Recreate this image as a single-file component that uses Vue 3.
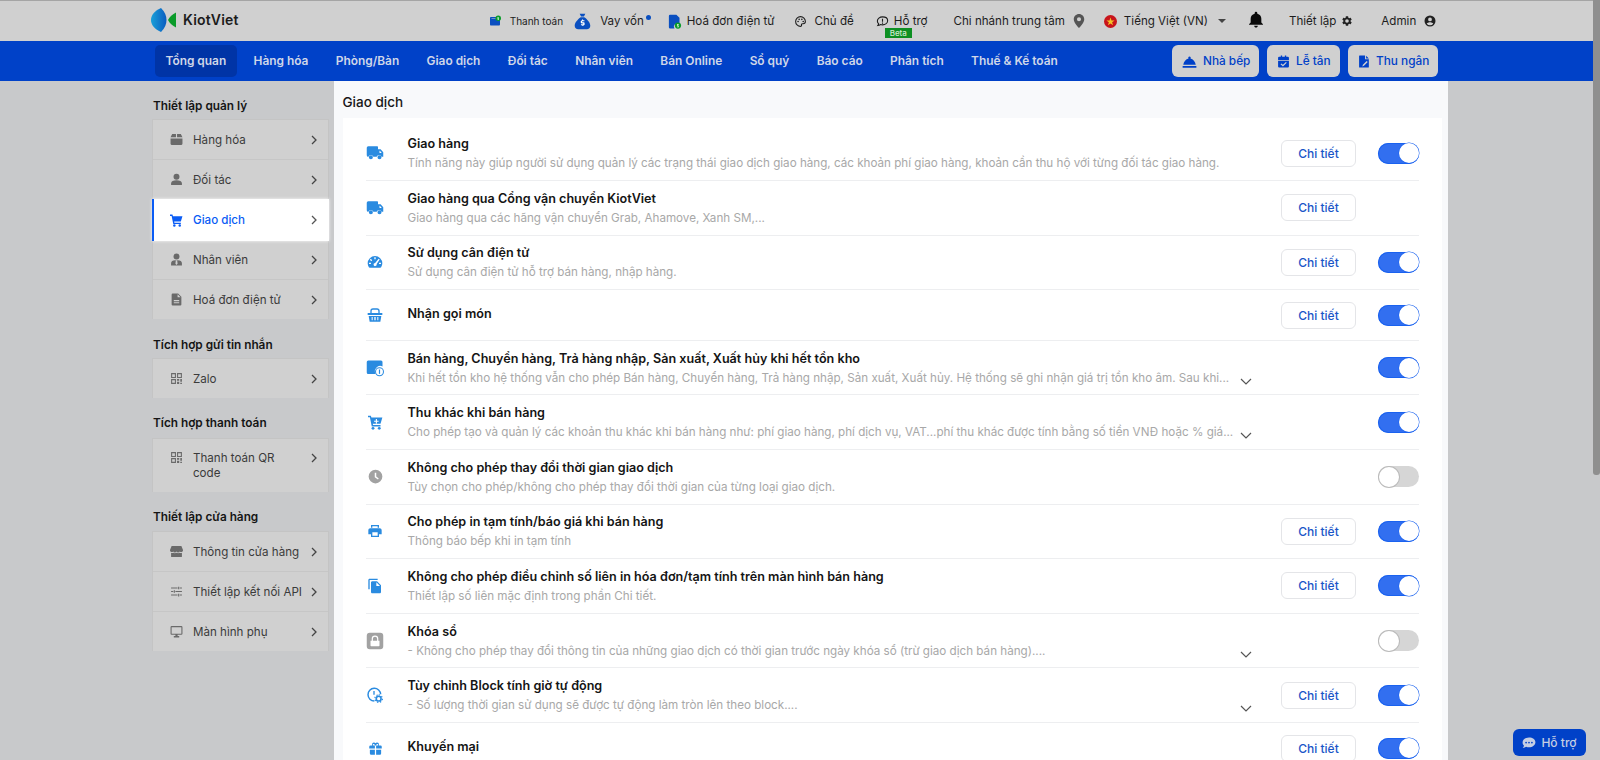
<script setup>
import { h } from 'vue'

const icons = {
  wallet: '<path d="M2 6c0-1 .8-2 2-2h13v3H5v1h15c1 0 2 .8 2 2v9c0 1-1 2-2 2H4c-1.2 0-2-1-2-2z"/><circle cx="18.5" cy="6.5" r="5.5" fill="#0a9b2a"/><path d="M17 4.5h3v1.2h-2v1h2v3h-3V8.5h2v-1h-2z" fill="#fff"/>',
  bag: '<path d="M8 1h8l-2 4h-4zM9.5 6h5C19 9 23 14 23 18c0 3-2 5-5 5H6c-3 0-5-2-5-5 0-4 4-9 8.5-12z"/><path d="M11.3 9h1.4v1.2h2v1.5h-3.2v1.2h2c1 0 1.5.6 1.5 1.5v1.5c0 .9-.5 1.5-1.8 1.5v1.1h-1.4v-1.1h-2v-1.5h3.2v-1.2h-2c-1 0-1.5-.6-1.5-1.5v-1.2c0-.9.5-1.5 1.8-1.5z" fill="#fff"/>',
  invoice: '<path d="M5 1h10l5 5v9h-4a5 5 0 0 0-4 8H5a2 2 0 0 1-2-2V3a2 2 0 0 1 2-2z"/><circle cx="17.5" cy="18.5" r="5" fill="#0a9b2a"/><path d="M16 16h3v1.2h-2v1h2v3h-3V20h2v-1h-2z" fill="#d8f0d8"/>',
  palette: '<path fill="none" stroke="currentColor" stroke-width="2" d="M12 3C7 3 3 7 3 12s4 9 9 9c1.5 0 2.3-1.2 1.9-2.3-.6-1.5.3-2.7 1.8-2.7H17c2.5 0 4-1.8 4-4 0-5-4-9-9-9z"/><circle cx="7.5" cy="12" r="1.5"/><circle cx="9.5" cy="8" r="1.5"/><circle cx="14.5" cy="8" r="1.5"/><circle cx="17" cy="12" r="1.5"/>',
  chat: '<path fill="none" stroke="currentColor" stroke-width="2" d="M12 3.5c-5.2 0-9.5 3.5-9.5 7.8 0 2 .9 3.7 2.4 5-.4 1.5-1.6 3.2-1.6 3.2 2.2-.1 3.8-1 4.8-1.8 1.2.4 2.5.6 3.9.6 5.2 0 9.5-3.5 9.5-8S17.2 3.5 12 3.5z"/><path d="M11 7h2v5.5h-2zM11 14h2v2h-2z"/>',
  pin: '<path fill-rule="evenodd" d="M12 0C7 0 3 4 3 9c0 6.5 9 15 9 15s9-8.5 9-15c0-5-4-9-9-9zm0 12.5a3.5 3.5 0 1 1 0-7 3.5 3.5 0 0 1 0 7z"/>',
  flag: '<circle cx="12" cy="12" r="12" fill="#c8151b"/><path d="M12 4.5l1.9 5.5h5.7l-4.6 3.5 1.7 5.6L12 15.7l-4.7 3.4L9 13.5 4.4 10h5.7z" fill="#f3c326"/>',
  bell: '<path d="M12 24c1.5 0 2.7-1.2 2.7-2.7H9.3C9.3 22.8 10.5 24 12 24zm8-7.5V11c0-3.7-2.2-6.8-6-7.7V2.5a2 2 0 0 0-4 0v.8C6.2 4.2 4 7.3 4 11v5.5L1.5 19v1h21v-1z"/>',
  gear: '<path fill-rule="evenodd" d="M19.14 12.94c.04-.3.06-.61.06-.94 0-.32-.02-.64-.07-.94l2.03-1.58a.49.49 0 0 0 .12-.61l-1.92-3.32a.488.488 0 0 0-.59-.22l-2.39.96c-.5-.38-1.03-.7-1.62-.94l-.36-2.54a.484.484 0 0 0-.48-.41h-3.84c-.24 0-.43.17-.47.41l-.36 2.54c-.59.24-1.13.57-1.62.94l-2.39-.96c-.22-.08-.47 0-.59.22L2.74 8.87c-.12.21-.08.47.12.61l2.03 1.58c-.05.3-.09.63-.09.94s.02.64.07.94l-2.03 1.58a.49.49 0 0 0-.12.61l1.92 3.32c.12.22.37.29.59.22l2.39-.96c.5.38 1.03.7 1.62.94l.36 2.54c.05.24.24.41.48.41h3.84c.24 0 .44-.17.47-.41l.36-2.54c.59-.24 1.13-.56 1.62-.94l2.39.96c.22.08.47 0 .59-.22l1.92-3.32c.12-.22.07-.47-.12-.61l-2.01-1.58zM12 15.6a3.6 3.6 0 1 1 0-7.2 3.6 3.6 0 0 1 0 7.2z"/>',
  user: '<path fill-rule="evenodd" d="M12 1a11 11 0 1 0 0 22 11 11 0 0 0 0-22zm0 4a3.8 3.8 0 1 1 0 7.6A3.8 3.8 0 0 1 12 5zm0 15.5a8.5 8.5 0 0 1-6.5-3c1-2 4-3 6.5-3s5.5 1 6.5 3a8.5 8.5 0 0 1-6.5 3z"/>',
  dome: '<path d="M1 19h22v3H1zM12 4a2 2 0 0 1 1.5 3.3C18 8 21 12.5 22 17H2C3 12.5 6 8 10.5 7.3A2 2 0 0 1 12 4z"/>',
  calcheck: '<path fill-rule="evenodd" d="M7 1h2.5v2h5V1H17v2h3a2 2 0 0 1 2 2v4H2V5a2 2 0 0 1 2-2h3zM2 10.5h20V21a2 2 0 0 1-2 2H4a2 2 0 0 1-2-2zm14.5 2.5L11 18.2l-3-2.7-1.5 1.5 4.5 4.3 7-6.8z"/>',
  filesign: '<path fill-rule="evenodd" d="M3 1h10v7h7v14a1 1 0 0 1-1 1H3a1 1 0 0 1-1-1V2a1 1 0 0 1 1-1zm12 .5L20 6.5h-5zM16 11l-7 7-1 3 3-1 7-7z"/>',
  comment: '<path fill-rule="evenodd" d="M12 2.5C5.9 2.5 1 6.4 1 11.2c0 2.1.9 4 2.5 5.5-.6 2-2.3 3.8-2.3 3.8 2.5 0 4.5-.9 5.8-2 1.5.6 3.2.9 5 .9 6.1 0 11-3.9 11-8.7S18.1 2.5 12 2.5zM7 9.7a1.5 1.5 0 1 1 0 3 1.5 1.5 0 0 1 0-3zm5 0a1.5 1.5 0 1 1 0 3 1.5 1.5 0 0 1 0-3zm5 0a1.5 1.5 0 1 1 0 3 1.5 1.5 0 0 1 0-3z"/>',
  box: '<path d="M4 2h7v6H1zM13 2h7l3 6H13zM1 10h22v10a2 2 0 0 1-2 2H3a2 2 0 0 1-2-2z"/>',
  person: '<circle cx="12" cy="7" r="5.5"/><path d="M2 22v-3c0-3.5 4-5.5 10-5.5s10 2 10 5.5v3z"/>',
  staff: '<circle cx="12" cy="6.5" r="5.5"/><path fill-rule="evenodd" d="M2 23v-4c0-3.5 3-5.5 7.5-5.5h5c4.5 0 7.5 2 7.5 5.5v4zM10.7 14l-.7 6 2 2 2-2-.7-6z"/>',
  doc: '<path fill-rule="evenodd" d="M5 1h10l6 6v14a2 2 0 0 1-2 2H5a2 2 0 0 1-2-2V3a2 2 0 0 1 2-2zm9 1.5V8h5.5zM7 13v2h10v-2zm0 4v2h10v-2z"/>',
  qr: '<path fill-rule="evenodd" d="M2 2h9v9H2zm2 2v5h5V4zM13 2h9v9h-9zm2 2v5h5V4zM2 13h9v9H2zm2 2v5h5v-5zM13 13h4v3h-4zM19 13h3v5h-3zM13 18h4v4h-4zM19 20h3v2h-3z"/>',
  store: '<path d="M3 2h18l3 7v1a3.5 3.5 0 0 1-6 2 3.5 3.5 0 0 1-6 0 3.5 3.5 0 0 1-6 0 3.5 3.5 0 0 1-6-2V9z"/><path d="M2 14.5c1.5.7 3 .6 4-.2 1.7 1 4 1.2 6 0 2 1.2 4.3 1 6 0 1 .8 2.5.9 4 .2V21a1 1 0 0 1-1 1H3a1 1 0 0 1-1-1z"/>',
  tune: '<path d="M2 4.5h12v2H2zM18 4.5h4v2h-4zM15 3h2v5h-2zM2 11h4v2H2zM10 11h12v2H10zM7 9.5h2v5H7zM2 17.5h12v2H2zM18 17.5h4v2h-4zM15 16h2v5h-2z"/>',
  monitor: '<path fill-rule="evenodd" d="M3 2h18a2 2 0 0 1 2 2v12a2 2 0 0 1-2 2h-7v2.5h3V23H7v-2.5h3V18H3a2 2 0 0 1-2-2V4a2 2 0 0 1 2-2zm0 2v12h18V4z"/>',
  cart: '<path d="M0 1h4.5l1 3H23l-3 10H7.7l.4 2H20v2.5H6L3 3.5H0z"/><circle cx="8" cy="21.3" r="2.3"/><circle cx="18" cy="21.3" r="2.3"/>',
  truck: '<path fill-rule="evenodd" d="M1 5a2 2 0 0 1 2-2h12a1 1 0 0 1 1 1v3h3.5l3.5 4v6h-2.2a3.5 3.5 0 0 0-6.6 0H9.8a3.5 3.5 0 0 0-6.6 0H3a2 2 0 0 1-2-2zm17 4v3h3l-2.5-3z"/><path fill-rule="evenodd" d="M6.5 15a2.7 2.7 0 1 1 0 5.4 2.7 2.7 0 0 1 0-5.4zm11.5 0a2.7 2.7 0 1 1 0 5.4 2.7 2.7 0 0 1 0-5.4z"/>',
  gauge: '<path fill-rule="evenodd" d="M12 3A11 11 0 0 0 1 14c0 2.2.6 4.3 1.8 6 .3.5.8.7 1.3.7h15.8c.5 0 1-.2 1.3-.7A11 11 0 0 0 23 14 11 11 0 0 0 12 3zM11 5h2v3h-2zM5.7 7.3l2.1 2.1-1.4 1.4-2.1-2.1zM3 13h3v2H3zm15 0h3v2h-3zm-.5-6l1.5 1.4-4.5 6.6a2.4 2.4 0 1 1-2.3-1.6z"/>',
  basket: '<path fill="none" stroke="currentColor" stroke-width="2" d="M6 9V6c0-1.5 1-3 3-3h6c2 0 3 1.5 3 3v3"/><path fill-rule="evenodd" d="M1 9h22v3H1zM2.5 13.5h19L20 22H4zM7 15v5h1.5v-5zm4 0v5h2v-5zm4.5 0v5H17v-5z"/>',
  calinfo: '<path d="M3 2h17a2 2 0 0 1 2 2v6a7 7 0 0 0-9 10H3a2 2 0 0 1-2-2V4a2 2 0 0 1 2-2z"/><circle cx="18" cy="17" r="5.3" fill="#fff" stroke="currentColor" stroke-width="1.4"/><path d="M17.2 14h1.6v5.8h-1.6z"/>',
  cartplus: '<path fill-rule="evenodd" d="M0 1h4.5l1 3H23l-3 10H7.7l.4 2H20v2.5H6L3 3.5H0zM12.5 6.5v2.7H9.7v1.7h2.8v2.6h1.8v-2.6H17V9.2h-2.7V6.5z"/><circle cx="8" cy="21.3" r="2.3"/><circle cx="18" cy="21.3" r="2.3"/>',
  clock: '<path fill-rule="evenodd" d="M12 1a11 11 0 1 0 0 22 11 11 0 0 0 0-22zm-1.2 5h2.4v6l4 3-1.3 1.8-5.1-3.8z"/>',
  print: '<path fill-rule="evenodd" d="M19 8H5c-1.7 0-3 1.3-3 3v6h4v4h12v-4h4v-6c0-1.7-1.3-3-3-3zm-3 11H8v-5h8zm-10-16v4h2V5h8v2h2V3z"/>',
  copy: '<path d="M16 1H4c-1.1 0-2 .9-2 2v14h2V3h12zm-1 4l6 6v10c0 1.1-.9 2-2 2H8c-1.1 0-2-.9-2-2V7c0-1.1.9-2 2-2zm-1 7h5.5L14 6.5z" fill-rule="evenodd"/>',
  lock: '<path fill-rule="evenodd" d="M5 1h14a4 4 0 0 1 4 4v14a4 4 0 0 1-4 4H5a4 4 0 0 1-4-4V5a4 4 0 0 1 4-4zm1 10.5V18a1 1 0 0 0 1 1h10a1 1 0 0 0 1-1v-6.5h-1.6V9a4.4 4.4 0 0 0-8.8 0v2.5zM9.2 11.5V9a2.8 2.8 0 0 1 5.6 0v2.5z"/>',
  clockgear: '<path fill="none" stroke="currentColor" stroke-width="2.2" d="M11 21a9.5 9.5 0 1 1 9.5-10"/><path fill="none" stroke="currentColor" stroke-width="2" d="M10.5 6v5.5"/><circle cx="17.5" cy="17.5" r="3.6" fill="none" stroke="currentColor" stroke-width="2.4"/><path fill="none" stroke="currentColor" stroke-width="1.7" stroke-dasharray="2 2.5" d="M17.5 11.8a5.7 5.7 0 1 1 0 11.4 5.7 5.7 0 0 1 0-11.4z"/>',
  gift: '<path fill-rule="evenodd" d="M4 7h2.7a3.2 3.2 0 0 1 5.3-3.5A3.2 3.2 0 0 1 17.3 7H20a2 2 0 0 1 2 2v3h-9V7h-2v5H2V9a2 2 0 0 1 2-2zm4.8-2.4a1.2 1.2 0 0 0 0 2.4H11V6.5c-.4-1.1-1.2-1.9-2.2-1.9zm6.4 0c-1 0-1.8.8-2.2 1.9V7h2.2a1.2 1.2 0 0 0 0-2.4zM3 14h8v8H5a2 2 0 0 1-2-2zm10 0h8v6a2 2 0 0 1-2 2h-6z"/>'
}

const Ic = (p) => h('svg', { viewBox: '0 0 24 24', fill: 'currentColor', innerHTML: icons[p.n] })

const navItems = ['Tổng quan', 'Hàng hóa', 'Phòng/Bàn', 'Giao dịch', 'Đối tác', 'Nhân viên', 'Bán Online', 'Sổ quý', 'Báo cáo', 'Phân tích', 'Thuế & Kế toán']

const groups = [
  { title: 'Thiết lập quản lý', cls: 'g1', items: [
    { t: 'Hàng hóa', i: 'box' }, { t: 'Đối tác', i: 'person' }, { t: 'Giao dịch', i: 'cart', active: true },
    { t: 'Nhân viên', i: 'staff' }, { t: 'Hoá đơn điện tử', i: 'doc' } ] },
  { title: 'Tích hợp gửi tin nhắn', cls: 'g2', items: [{ t: 'Zalo', i: 'qr' }] },
  { title: 'Tích hợp thanh toán', cls: 'g3', items: [{ t: 'Thanh toán QR code', i: 'qr', tall: true }] },
  { title: 'Thiết lập cửa hàng', cls: 'g4', items: [
    { t: 'Thông tin cửa hàng', i: 'store' }, { t: 'Thiết lập kết nối API', i: 'tune' }, { t: 'Màn hình phụ', i: 'monitor' } ] }
]

const rows = [
  { i: 'truck', t: 'Giao hàng', d: 'Tính năng này giúp người sử dụng quản lý các trạng thái giao dịch giao hàng, các khoản phí giao hàng, khoản cần thu hộ với từng đối tác giao hàng.', btn: 1, tg: 1 },
  { i: 'truck', t: 'Giao hàng qua Cổng vận chuyển KiotViet', d: 'Giao hàng qua các hãng vận chuyển Grab, Ahamove, Xanh SM,...', btn: 1 },
  { i: 'gauge', s: 's16', t: 'Sử dụng cân điện tử', d: 'Sử dụng cân điện tử hỗ trợ bán hàng, nhập hàng.', btn: 1, tg: 1 },
  { i: 'basket', s: 's16', t: 'Nhận gọi món', btn: 1, tg: 1, short: 1 },
  { i: 'calinfo', t: 'Bán hàng, Chuyển hàng, Trả hàng nhập, Sản xuất, Xuất hủy khi hết tồn kho', d: 'Khi hết tồn kho hệ thống vẫn cho phép Bán hàng, Chuyển hàng, Trả hàng nhập, Sản xuất, Xuất hủy. Hệ thống sẽ ghi nhận giá trị tồn kho âm. Sau khi...', more: 1, tg: 1 },
  { i: 'cartplus', s: 's15', t: 'Thu khác khi bán hàng', d: 'Cho phép tạo và quản lý các khoản thu khác khi bán hàng như: phí giao hàng, phí dịch vụ, VAT...phí thu khác được tính bằng số tiền VNĐ hoặc % giá...', more: 1, tg: 1 },
  { i: 'clock', s: 's15', gray: 1, t: 'Không cho phép thay đổi thời gian giao dịch', d: 'Tùy chọn cho phép/không cho phép thay đổi thời gian của từng loại giao dịch.', tg: 2 },
  { i: 'print', s: 's16', t: 'Cho phép in tạm tính/báo giá khi bán hàng', d: 'Thông báo bếp khi in tạm tính', btn: 1, tg: 1 },
  { i: 'copy', s: 's16', t: 'Không cho phép điều chỉnh số liên in hóa đơn/tạm tính trên màn hình bán hàng', d: 'Thiết lập số liên mặc định trong phần Chi tiết.', btn: 1, tg: 1 },
  { i: 'lock', gray: 1, t: 'Khóa sổ', d: '- Không cho phép thay đổi thông tin của những giao dịch có thời gian trước ngày khóa sổ (trừ giao dịch bán hàng)....', more: 1, tg: 2 },
  { i: 'clockgear', s: 's16', t: 'Tùy chỉnh Block tính giờ tự động', d: '- Số lượng thời gian sử dụng sẽ được tự động làm tròn lên theo block....', more: 1, btn: 1, tg: 1 },
  { i: 'gift', s: 's15', t: 'Khuyến mại', btn: 1, tg: 1, short: 1 }
]
</script>

<template>
  <div class="app">
    <div class="page">
      <header class="top">
        <svg class="logo" viewBox="0 0 25 24">
          <defs>
            <linearGradient id="lg" x1="0" y1="0" x2="1" y2="0">
              <stop offset="0" stop-color="#1aa0d8" />
              <stop offset="1" stop-color="#0a5cc0" />
            </linearGradient>
          </defs>
          <path fill="url(#lg)" d="M10 0C3 3 0 7.5 0 12s3 9 10 12c4-4 5.5-8 5.5-12S14 4 10 0z" />
          <path fill="#0a9b2a" d="M25 4.5c-3.5 1.5-6.5 4.5-8 7.5 1.5 3 4.5 6 8 7.5z" />
        </svg>
        <span class="brand">KiotViet</span>

        <span class="t i-thanh"><Ic n="wallet" class="ic blue w12" /><span class="small lbl-thanh">Thanh toán</span></span>
        <span class="t i-vay"><Ic n="bag" class="ic blue w17" /><span class="lbl-vay">Vay vốn</span><i class="dot"></i></span>
        <span class="t i-hd"><Ic n="invoice" class="ic blue w15" /><span class="lbl-hd">Hoá đơn điện tử</span></span>
        <span class="t i-cd"><Ic n="palette" class="ic w13" /><span class="lbl-cd">Chủ đề</span></span>
        <span class="t i-ht"><Ic n="chat" class="ic w13" /><span class="lbl-ht">Hỗ trợ</span><b class="beta">Beta</b></span>
        <span class="t i-cn"><span>Chi nhánh trung tâm</span><Ic n="pin" class="ic gray w14 pin" /></span>
        <span class="t i-lang"><Ic n="flag" class="ic w13" /><span class="lbl-lang">Tiếng Việt (VN)</span><i class="caret"></i></span>
        <Ic n="bell" class="ic black bell" />
        <span class="t i-tl"><span>Thiết lập</span><Ic n="gear" class="ic dark w12 gear" /></span>
        <span class="t i-ad"><span>Admin</span><Ic n="user" class="ic dark w12 usr" /></span>
      </header>

      <nav class="nav">
        <a v-for="(n, idx) in navItems" :key="n" class="nav-item" :class="{ on: idx === 0 }">{{ n }}</a>
        <span class="nav-right">
          <button class="nb b1"><Ic n="dome" class="nic w15" />Nhà bếp</button>
          <button class="nb b2"><Ic n="calcheck" class="nic w13" />Lễ tân</button>
          <button class="nb b3"><Ic n="filesign" class="nic w13" />Thu ngân</button>
        </span>
      </nav>

      <main class="main">
        <aside class="side">
          <section v-for="g in groups" :key="g.title" class="grp" :class="g.cls">
            <h3>{{ g.title }}</h3>
            <ul>
              <li v-for="it in g.items" :key="it.t" :class="{ active: it.active, tall: it.tall }">
                <Ic :n="it.i" class="sic" />
                <span class="stxt">{{ it.t }}</span>
                <svg class="chev" viewBox="0 0 6 10"><path d="M1 1l4 4-4 4" fill="none" stroke="currentColor" stroke-width="1.3" /></svg>
              </li>
            </ul>
          </section>
        </aside>

        <section class="panel">
          <h2>Giao dịch</h2>
          <div class="card">
            <div v-for="r in rows" :key="r.t" class="row" :class="{ short: r.short }">
              <span class="ricon"><Ic :n="r.i" class="ric" :class="[r.s, { rgray: r.gray }]" /></span>
              <div class="body">
                <div class="title">{{ r.t }}</div>
                <div v-if="r.d" class="descline">
                  <div class="desc">{{ r.d }}</div>
                  <svg v-if="r.more" class="more" viewBox="0 0 12 7"><path d="M1 1l5 5 5-5" fill="none" stroke="#555" stroke-width="1.2" /></svg>
                </div>
              </div>
              <div class="btnslot"><button v-if="r.btn" class="detail">Chi tiết</button></div>
              <div class="tgslot">
                <span v-if="r.tg" class="tg" :class="r.tg === 1 ? 'tgon' : 'tgoff'"><i></i></span>
              </div>
            </div>
          </div>
        </section>
      </main>
    </div>
    <div class="scroll"><div class="thumb"></div></div>
    <button class="help"><Ic n="comment" class="hic" />Hỗ trợ</button>
  </div>
</template>

<style>
html, body { margin: 0; padding: 0; overflow: hidden; }
</style>

<style scoped>
* { box-sizing: border-box; }
.app { position: relative; display: flex; width: 1600px; height: 760px; overflow: hidden; background: #c8c9cb; font-family: Inter, "Noto Sans", sans-serif; color: #111; }
.page { width: 1593px; height: 760px; display: flex; flex-direction: column; }
.scroll { width: 7px; }
.thumb { height: 475px; background: #8f8f8f; border-radius: 0 0 3px 3px; }

.top { height: 41px; flex: none; display: flex; align-items: center; background: #d0d0d0; border-top: 1px solid #a5a5a5; padding-left: 151px; font-size: 11.6px; color: #1d1d1d; white-space: nowrap; }
.logo { width: 25px; height: 24px; margin-top: -3px; flex: none; }
.brand { font-weight: 600; font-size: 14px; margin-left: 7px; color: #1c1c1c; letter-spacing: .2px; margin-top: -3px; }
.t { display: inline-flex; align-items: center; position: relative; }
.ic { flex: none; display: block; }
.w12 { width: 12px; height: 12px; }
.w13 { width: 13px; height: 13px; }
.w14 { width: 14px; height: 14px; }
.w15 { width: 15px; height: 15px; }
.w17 { width: 17px; height: 17px; }
.blue { color: #0a4fc0; }
.gray { color: #555; }
.dark { color: #222; }
.black { color: #0a0a0a; }
.small { font-size: 10px; }
.i-thanh { margin-left: 250px; }
.lbl-thanh { margin-left: 9px; }
.i-vay { margin-left: 11px; }
.lbl-vay { margin-left: 9px; }
.dot { position: absolute; right: -7px; top: 2px; width: 5px; height: 5px; border-radius: 50%; background: #0a4fc0; }
.i-hd { margin-left: 23px; }
.lbl-hd { margin-left: 5px; }
.i-cd { margin-left: 20px; }
.lbl-cd { margin-left: 7px; }
.i-ht { margin-left: 22px; }
.lbl-ht { margin-left: 5px; }
.beta { position: absolute; left: 9px; top: 14px; width: 27px; height: 10px; background: #0d8f22; color: #cfe8cf; font-size: 8px; line-height: 10px; font-weight: 500; text-align: center; }
.i-cn { margin-left: 26px; }
.pin { margin-left: 7px; }
.i-lang { margin-left: 18px; }
.lbl-lang { margin-left: 7px; }
.caret { width: 0; height: 0; border-left: 4px solid transparent; border-right: 4px solid transparent; border-top: 4px solid #444; margin-left: 10px; }
.bell { width: 16px; height: 17px; margin-left: 22px; margin-top: -3px; }
.i-tl { margin-left: 25px; }
.gear { margin-left: 5px; }
.i-ad { margin-left: 28px; }
.usr { margin-left: 8px; }

.nav { height: 40px; flex: none; display: flex; align-items: center; gap: 6.4px; background: #0041c8; padding-left: 155px; }
.nav-item { height: 32px; line-height: 32px; padding: 0 10.5px; border-radius: 5px; color: #d0d7e8; font-size: 11.9px; font-weight: 600; white-space: nowrap; }
.nav-item.on { background: #0034a6; }
.nav-right { margin-left: auto; margin-right: 155px; display: flex; gap: 8px; }
.nb { height: 32px; display: inline-flex; align-items: center; border: 0; border-radius: 6px; background: #d0d0d0; color: #0041c8; font: 500 11.8px Inter, sans-serif; padding: 0; white-space: nowrap; }
.nic { margin-right: 6px; flex: none; }
.b1 { width: 87px; padding-left: 10px; }
.b2 { width: 73px; padding-left: 10px; }
.b3 { width: 90px; padding-left: 10px; }
.b3 .nic { margin-right: 5px; }

.main { flex: 1; min-height: 0; display: flex; overflow: hidden; }
.side { width: 334px; flex: none; padding-left: 151.5px; }
.grp h3 { margin: 0 0 6px; font-size: 11.8px; line-height: 16px; font-weight: 600; color: #151515; padding-left: 1.5px; }
.g1 { padding-top: 16.5px; }
.g1 h3, .g2 h3 { margin-bottom: 5.5px; }
.g2 { padding-top: 17.5px; }
.g3 { padding-top: 17px; }
.g3 h3 { margin-bottom: 7px; }
.g4 { padding-top: 17px; }
ul { list-style: none; margin: 0; padding: 0; width: 177px; background: #d0d0d0; border: 1px solid #c4c4c4; border-bottom: 0; }
li { position: relative; height: 40px; display: flex; align-items: center; padding-left: 17.5px; border-bottom: 1px solid #c6c6c6; font-size: 11.6px; color: #3b3b3b; }
li:last-child { height: 39px; border-bottom: 0; }
li.tall { height: 53px; align-items: flex-start; padding-top: 12px; }
li.tall .stxt { line-height: 14.5px; width: 96px; }
li.active { background: #fff; color: #0a5cf5; font-weight: 500; margin: -1px; height: 42px; padding-left: 17.5px; border-left: 2px solid #0a5cf5; border-bottom: 0; box-shadow: 0 0 3px rgba(255,255,255,.9); z-index: 1; }
li.active .sic { color: #0a5cf5; margin-left: -1px; }
li.active .chev { color: #555; right: 12px; }
.sic { width: 13px; height: 13px; flex: none; color: #6a6a6a; }
.stxt { margin-left: 10px; }
.chev { position: absolute; right: 11px; top: 50%; width: 6px; height: 10px; margin-top: -5px; color: #444; }
li.tall .chev { top: 14px; margin-top: 0; }

.panel { width: 1114px; flex: none; background: #f8f9fb; padding: 0 6px 0 8.5px; }
.panel h2 { margin: 0; height: 37px; line-height: 42px; font-size: 13.5px; font-weight: 500; color: #171717; }
.card { background: #fff; padding: 8.5px 23px 0; height: 700px; }
.row { display: flex; align-items: center; height: 54.6px; border-bottom: 1px solid #edeef0; }
.row.short { height: 50.5px; }
.row:last-child { border-bottom: 0; }
.ricon { width: 42px; padding-right: 23px; flex: none; display: flex; align-items: center; justify-content: center; }
.ric { width: 18px; height: 18px; flex: none; color: #2a8be0; }
.ric.s15 { width: 15px; height: 15px; }
.ric.s16 { width: 16px; height: 16px; }
.ric.rgray { color: #a2a2a2; }
.body { flex: 1; min-width: 0; padding-top: 1px; }
.row.short .body { padding-top: 0; margin-top: -2px; }
.title { font-size: 12.6px; line-height: 18px; font-weight: 600; color: #151515; white-space: nowrap; }
.descline { display: flex; align-items: center; margin-top: 1px; }
.desc { font-size: 11.65px; line-height: 18px; color: #a8a8a8; white-space: nowrap; }
.more { position: absolute; width: 12px; height: 7px; left: 1240px; margin-top: 7px; }
.btnslot { width: 76px; flex: none; }
.detail { width: 75px; height: 27px; background: #fff; border: 1px solid #e4e5e8; border-radius: 6px; color: #1a56c8; font: 500 12px Inter, sans-serif; padding: 0; display: block; }
.tgslot { width: 41px; margin-left: 21px; flex: none; }
.tg { display: block; position: relative; width: 41px; height: 21px; border-radius: 11px; }
.tg i { position: absolute; top: .5px; width: 20px; height: 20px; border-radius: 50%; background: #fff; }
.tgon { background: #326ff0; box-shadow: inset 0 0 0 1px #1a62ef; }
.tgon i { right: .5px; box-shadow: 0 0 0 .5px #1a62ef; }
.tgoff { background: #d6d6d6; }
.tgoff i { left: .5px; box-shadow: 0 0 0 1px #bbb; }

.help { position: absolute; left: 1513px; top: 729px; width: 73px; height: 27px; display: flex; align-items: center; justify-content: center; gap: 5px; border: 0; border-radius: 6px; background: #0041c8; color: #c5cfe3; font: 500 12px Inter, sans-serif; }
.hic { width: 14px; height: 14px; }
</style>
